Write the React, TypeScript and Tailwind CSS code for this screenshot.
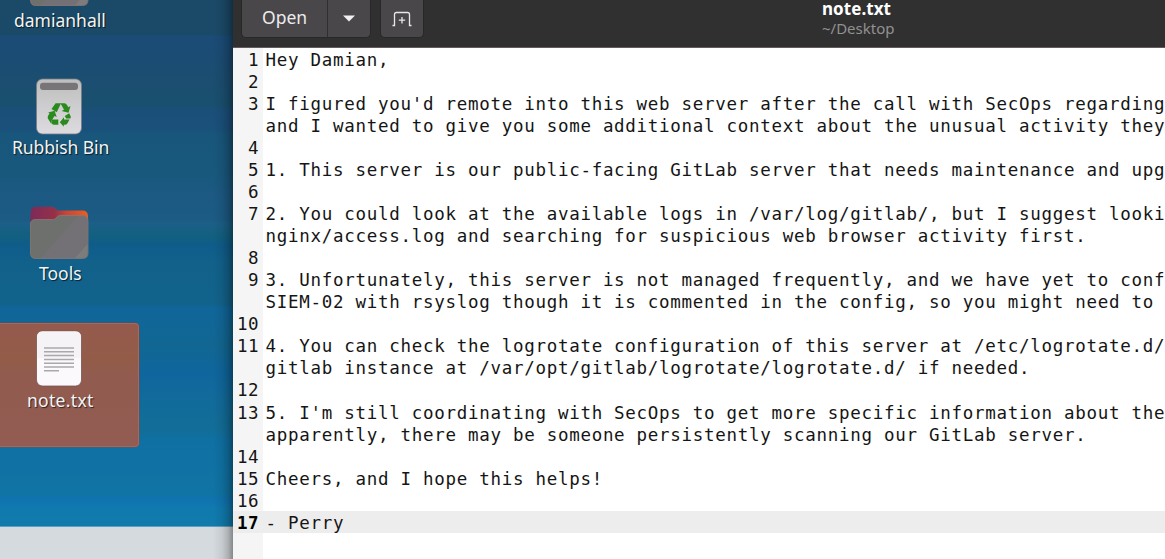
import React from 'react';

type Line = { n?: number; text: string };

const LINES: Line[] = [
  { n: 1, text: 'Hey Damian,' },
  { n: 2, text: '' },
  { n: 3, text: "I figured you'd remote into this web server after the call with SecOps regarding" },
  { text: 'and I wanted to give you some additional context about the unusual activity they' },
  { n: 4, text: '' },
  { n: 5, text: '1. This server is our public-facing GitLab server that needs maintenance and upg' },
  { n: 6, text: '' },
  { n: 7, text: '2. You could look at the available logs in /var/log/gitlab/, but I suggest looki' },
  { text: 'nginx/access.log and searching for suspicious web browser activity first.' },
  { n: 8, text: '' },
  { n: 9, text: '3. Unfortunately, this server is not managed frequently, and we have yet to conf' },
  { text: 'SIEM-02 with rsyslog though it is commented in the config, so you might need to' },
  { n: 10, text: '' },
  { n: 11, text: '4. You can check the logrotate configuration of this server at /etc/logrotate.d/' },
  { text: 'gitlab instance at /var/opt/gitlab/logrotate/logrotate.d/ if needed.' },
  { n: 12, text: '' },
  { n: 13, text: "5. I'm still coordinating with SecOps to get more specific information about the" },
  { text: 'apparently, there may be someone persistently scanning our GitLab server.' },
  { n: 14, text: '' },
  { n: 15, text: 'Cheers, and I hope this helps!' },
  { n: 16, text: '' },
  { n: 17, text: '- Perry' },
];

function Folder() {
  return (
    <svg width="60" height="54" viewBox="0 0 60 54" className="block">
      <defs>
        <linearGradient id="tab" x1="0" x2="1">
          <stop offset="0" stopColor="#7d2a59" />
          <stop offset=".42" stopColor="#963049" />
          <stop offset=".6" stopColor="#c24638" />
          <stop offset="1" stopColor="#f05c22" />
        </linearGradient>
      </defs>
      <path d="M1.500 8Q1.500 .7 6.500 .7H22.500Q24.500 .7 25.500 1.700L28.500 4.600H53.500Q59 4.600 59 10.500V30H1.500Z" fill="url(#tab)" />
      <path d="M1.500 18Q1.500 13.500 6.500 13.500H23.500Q25.500 13.500 26.500 12.500L28.500 10.500Q29.500 9.500 31.500 9.500H53.500Q59 9.500 59 15V47Q59 52.500 53.500 52.500H6.500Q1.500 52.500 1.500 47Z" fill="#6e706e" stroke="#8b7772" strokeWidth=".8" />
      <path d="M12 52L49 10H53.500Q58.500 10 58.500 15V38L46 52Z" fill="#747176" />
      <path d="M46 52L58.500 38V47Q58.500 52 53.500 52Z" fill="#7b7c7b" />
    </svg>
  );
}

function Bin() {
  return (
    <svg width="48" height="58" viewBox="0 0 48 58" className="block">
      <defs>
        <linearGradient id="bin" x2="0" y2="1">
          <stop offset="0" stopColor="#bebebe" />
          <stop offset="1" stopColor="#dddbdf" />
        </linearGradient>
      </defs>
      <rect x="1.500" y="1" width="45" height="55" rx="6" fill="url(#bin)" stroke="#777c85" strokeWidth=".8" />
      <rect x="5" y="4.800" width="38" height="7.200" rx="3" fill="#777577" />
      <g fill="#2b8a1d">
        <path d="M16.500 31L20.600 25.300H26L21.700 34.200Z" />
        <path d="M25.300 25.300H29.500Q31 25.300 32 27L33.300 29.200L35.500 28L33.500 34.700L26.700 33L29 31.700L27 28Z" />
        <path d="M13.200 34.600L19.600 32.700L21.700 39L19.500 38L16.700 42.500L16 45.500L12.900 40.500Q12.300 39.200 13.200 37.500L14.500 35.500Z" />
        <path d="M16.800 41.500H23.300V46.800H18.700Q17.300 46.800 16.300 45Z" />
        <path d="M24.800 44.300L29 39.300V41.500H34.500L32.500 45.300Q31.500 46.800 30 46.800H28.800V48.800Z" />
        <path d="M29.800 38L34.200 35.200L35.600 38.300Q36 39.500 35.300 40.500H31.200Z" />
      </g>
    </svg>
  );
}

function TextFile() {
  return (
    <svg width="48" height="58" viewBox="0 0 48 58" className="block">
      <rect x="1.500" y="1" width="45" height="55" rx="6" fill="#fcf9fd" stroke="#775650" strokeWidth=".8" />
      <path d="M2 28V7Q2 1.400 7.400 1.400H40.600Q46 1.400 46 7V28Z" fill="#f5f3f5" />
      <path d="M9 18H39M9 21.800H39M9 25.600H39M9 29.400H39M9 33.200H39M9 37H39M9 40.800H24" stroke="#aaa9aa" strokeWidth="1.500" />
    </svg>
  );
}

const LABEL =
  "whitespace-nowrap font-['Noto_Sans'] text-[17.5px] leading-6 text-[#f2f4f5] [text-shadow:1px_1px_1px_#000a]";

function Desktop() {
  return (
    <aside className="relative flex h-full w-[233px] shrink-0 flex-col bg-[#d5dade]">
      <div className="flex h-[527px] shrink-0 flex-col border-b border-[#5b9fc4] bg-[linear-gradient(#1b4a68_0px,#1b4a69_35px,#1b4b77_36px,#1b4e70_84px,#19506f_105px,#1b4f7b_112px,#1a517b_130px,#18567b_134px,#19587d_175px,#1c5983_195px,#1b5b84_220px,#1c5f88_223px,#12607f_236px,#0f5c8b_245px,#11618b_262px,#12638b_304px,#10669a_308px,#116792_345px,#0f669e_374px,#116a9b_395px,#126e98_430px,#0f70a4_440px,#1074a4_494px,#1073b0_499px,#107aaf_509px,#107bab_527px)]">
        <div className="flex h-[78px] flex-col pl-[29px]">
          <div className="-mt-[47px]"><Folder /></div>
          <span className={`${LABEL} -ml-[15px] mt-[1px]`}>damianhall</span>
        </div>
        <div className="flex h-[128px] flex-col pl-[35px]">
          <Bin />
          <span className={`${LABEL} -ml-[23px] -mt-px tracking-[-0.1px]`}>Rubbish Bin</span>
        </div>
        <div className="flex h-[117px] flex-col pl-[29px]">
          <Folder />
          <span className={`${LABEL} ml-[10px] mt-[1px]`}>Tools</span>
        </div>
        <div className="flex h-[124px] w-[139px] flex-col rounded-r border border-l-0 border-[#cd5b38] bg-[linear-gradient(#955a4d_0%,#935c48_30%,#915b50_42%,#935c52_100%)] pl-[35px] pt-[6px]">
          <TextFile />
          <span className={`${LABEL} -ml-[8px] tracking-[0.3px]`}>note.txt</span>
        </div>
      </div>
      <div className="absolute inset-y-0 right-0 w-[20px] bg-[linear-gradient(to_right,transparent,#00000012_45%,#00000030_75%,#00000060)]" />
    </aside>
  );
}

function Header() {
  return (
    <header className="flex h-12 shrink-0 border-b border-[#625a5d] bg-[#303030]">
      <div className="ml-2 flex h-[38px] w-[130px] overflow-hidden rounded-b-[5px] border border-t-0 border-[#292729] bg-[#4a474a]">
        <div className="w-[86px] border-r border-[#302e30] pl-5 pt-[5px] font-['Noto_Sans'] text-[17.5px] leading-6 text-[#ececec]">
          Open
        </div>
        <div className="flex flex-1 items-center justify-center">
          <svg width="12" height="7" viewBox="0 0 12 7"><path d="M0 .5H12L6 6.500Z" fill="#f1f1f1" /></svg>
        </div>
      </div>
      <div className="ml-[9px] flex h-[38px] w-[44px] items-center justify-center rounded-b-[5px] border border-t-0 border-[#292729] bg-[#4a474a]">
        <svg width="20" height="16" viewBox="0 0 20 16" fill="none" stroke="#e8e8e8" strokeWidth="1.300">
          <path d="M.5 14.500H2.500V3.500Q2.500 1.500 4.500 1.500H15.500Q17.500 1.500 17.500 3.500V14.500H19.500M10 6V12.500M6.800 9.200H13.200" />
        </svg>
      </div>
      <div className="ml-[398px] whitespace-nowrap font-['Noto_Sans']">
        <div className="text-[17px] font-bold leading-[18px] tracking-[0.05px] text-white">note.txt</div>
        <div className="text-[15px] leading-[20px] text-[#929190]">~/Desktop</div>
      </div>
    </header>
  );
}

export default function App() {
  return (
    <div className="flex h-[559px] w-[1165px] overflow-hidden">
      <Desktop />
      <main className="flex min-w-0 flex-1 flex-col bg-white">
        <Header />
        <div className="flex flex-1 flex-col bg-[linear-gradient(to_right,#f5f5f5_30px,#fff_30px)] font-['DejaVu_Sans_Mono'] text-[17.5px] text-[#151515]">
          {LINES.map((line, i) => (
            <div
              key={i}
              className={`flex h-[22.04px] shrink-0 whitespace-pre leading-[25.4px] ${line.n === 17 ? 'bg-[#ededed]' : ''}`}
            >
              <span className={`w-[26px] shrink-0 text-right tracking-[0.5px] ${line.n === 17 ? 'font-bold text-black' : ''}`}>
                {line.n ?? ''}
              </span>
              <span className="ml-[6.5px] tracking-[0.71px]">{line.text}</span>
            </div>
          ))}
        </div>
      </main>
    </div>
  );
}
